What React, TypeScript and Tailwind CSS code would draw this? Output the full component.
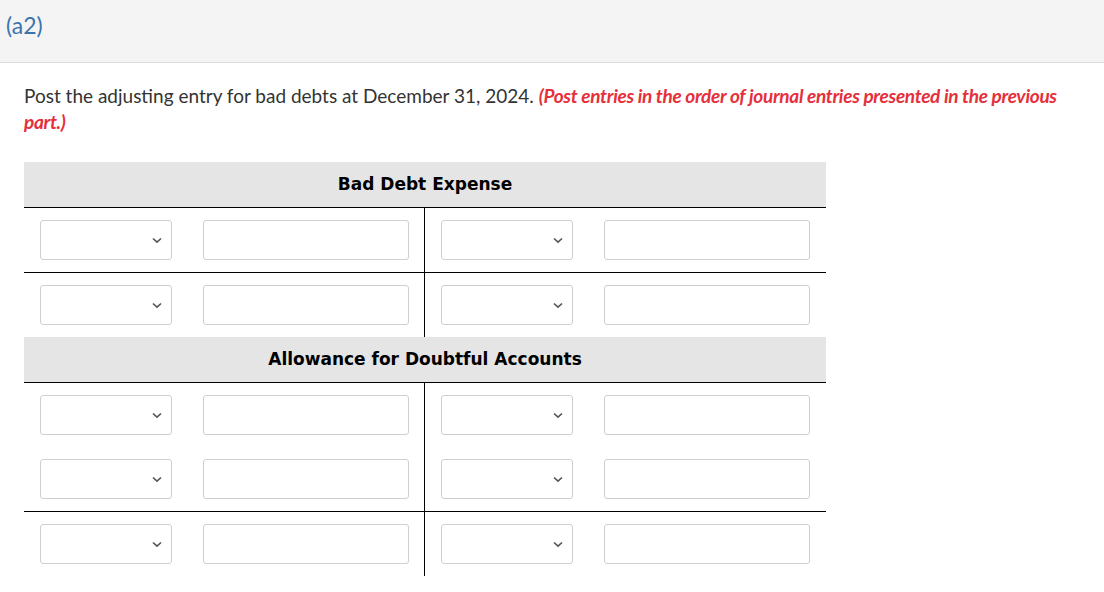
import React from "react";

function Sel() {
  return (
    <div className="relative w-[132px] h-[40px] border border-[#cfcfcf] rounded-[3px] bg-white shrink-0">
      <svg className="absolute right-[9px] top-[16px]" width="10" height="7" viewBox="0 0 10 7">
        <path d="M1 1.5 L5 5.2 L9 1.5" fill="none" stroke="#555" strokeWidth="1.6" />
      </svg>
    </div>
  );
}

function Inp() {
  return <div className="w-[206px] h-[40px] border border-[#cfcfcf] rounded-[3px] bg-white shrink-0" />;
}

function Row() {
  return (
    <div className="flex">
      <div className="w-[401px] shrink-0 flex items-center pl-4 gap-[31px] border-r border-black py-3">
        <Sel />
        <Inp />
      </div>
      <div className="flex-1 flex items-center pl-4 gap-[31px] py-3">
        <Sel />
        <Inp />
      </div>
    </div>
  );
}

function Header({ title }: { title: string }) {
  return (
    <div className="h-[46px] bg-[#e5e5e5] border-b border-black flex items-center justify-center font-['DejaVu_Sans',sans-serif] font-bold text-[17px] text-black">
      {title}
    </div>
  );
}

export default function App() {
  return (
    <div className="w-[1104px] h-[592px] bg-white font-['Lato',sans-serif] overflow-hidden">
      <div className="h-[63px] bg-[#f4f4f4] border-b border-[#dcdcdc] pl-[6px] pt-[9px] text-[23px] leading-[32px] text-[#3a74ae]">
        (a2)
      </div>
      <p className="px-6 pt-[20px] text-[19px] leading-[26px] text-[#333]">
        Post the adjusting entry for bad debts at December 31, 2024.{" "}
        <span className="italic font-bold text-[#e5303b] tracking-[-0.3px]">
          (Post entries in the order of journal entries presented in the previous
        </span>
        <br />
        <span className="italic font-bold text-[#e5303b] tracking-[-0.3px]">part.)</span>
      </p>
      <div className="ml-6 mt-[27px] w-[802px]">
        <Header title="Bad Debt Expense" />
        <div className="border-b border-black">
          <Row />
        </div>
        <Row />
        <Header title="Allowance for Doubtful Accounts" />
        <div className="border-b border-black">
          <Row />
          <Row />
        </div>
        <Row />
      </div>
    </div>
  );
}
